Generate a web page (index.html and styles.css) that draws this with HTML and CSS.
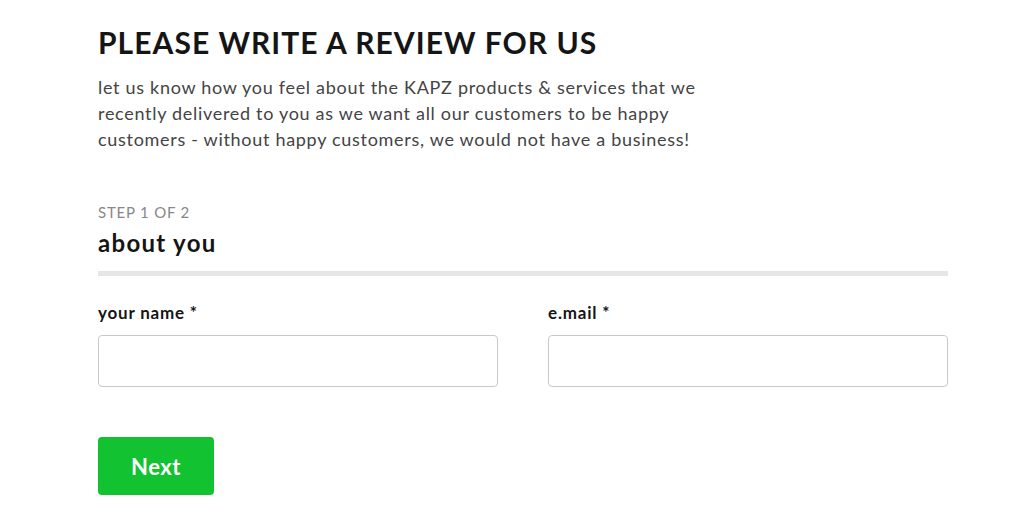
FILE: index.html
```html
<!DOCTYPE html>
<html>
<head>
<meta charset="utf-8">
<link rel="stylesheet" href="styles.css">
</head>
<body>
<main class="page">
  <h1 class="title">PLEASE WRITE A REVIEW FOR US</h1>
  <p class="intro">let us know how you feel about the KAPZ products &amp; services that we<br>recently delivered to you as we want all our customers to be happy<br>customers - without happy customers, we would not have a business!</p>
  <div class="step">STEP 1 OF 2</div>
  <h2 class="section">about you</h2>
  <div class="divider"></div>
  <form class="fields">
    <div class="field">
      <label class="label">your name *</label>
      <input class="input" type="text">
    </div>
    <div class="field">
      <label class="label">e.mail *</label>
      <input class="input" type="text">
    </div>
  </form>
  <button class="btn" type="button">Next</button>
</main>
</body>
</html>
```
FILE: styles.css
```css
* { box-sizing: border-box; }
html, body { margin: 0; padding: 0; background: #fff; }
body { font-family: "Lato", "Noto Sans", sans-serif; color: #1a1a1a; }
.page { width: 850px; margin-left: 98px; padding-top: 24px; display: flex; flex-direction: column; align-items: flex-start; }
.title { margin: 0; font-size: 30px; line-height: 36px; font-weight: 700; color: #151515; letter-spacing: 1.05px; }
.intro { margin: 14px 0 0; font-size: 18px; line-height: 26px; color: #444; letter-spacing: 0.7px; }
.step { margin-top: 51px; font-size: 15px; line-height: 18px; color: #888; letter-spacing: 0.8px; }
.section { margin: 7px 0 0; font-size: 24px; line-height: 30px; font-weight: 700; color: #151515; letter-spacing: 1.3px; }
.divider { align-self: stretch; height: 5px; background: #e6e6e6; margin-top: 13px; }
.fields { align-self: stretch; display: flex; gap: 50px; margin-top: 27px; }
.field { flex: 1; display: flex; flex-direction: column; gap: 12px; }
.label { font-size: 17px; line-height: 20px; font-weight: 700; color: #151515; letter-spacing: 0.8px; }
.input { height: 52px; border: 1px solid #c9c9c9; border-radius: 4px; background: #fff; }
.btn { margin-top: 50px; width: 116px; height: 58px; border: none; border-radius: 4px; background: #12c231; color: #fff; font-family: inherit; font-size: 22px; font-weight: 700; letter-spacing: 0.5px; }
```
